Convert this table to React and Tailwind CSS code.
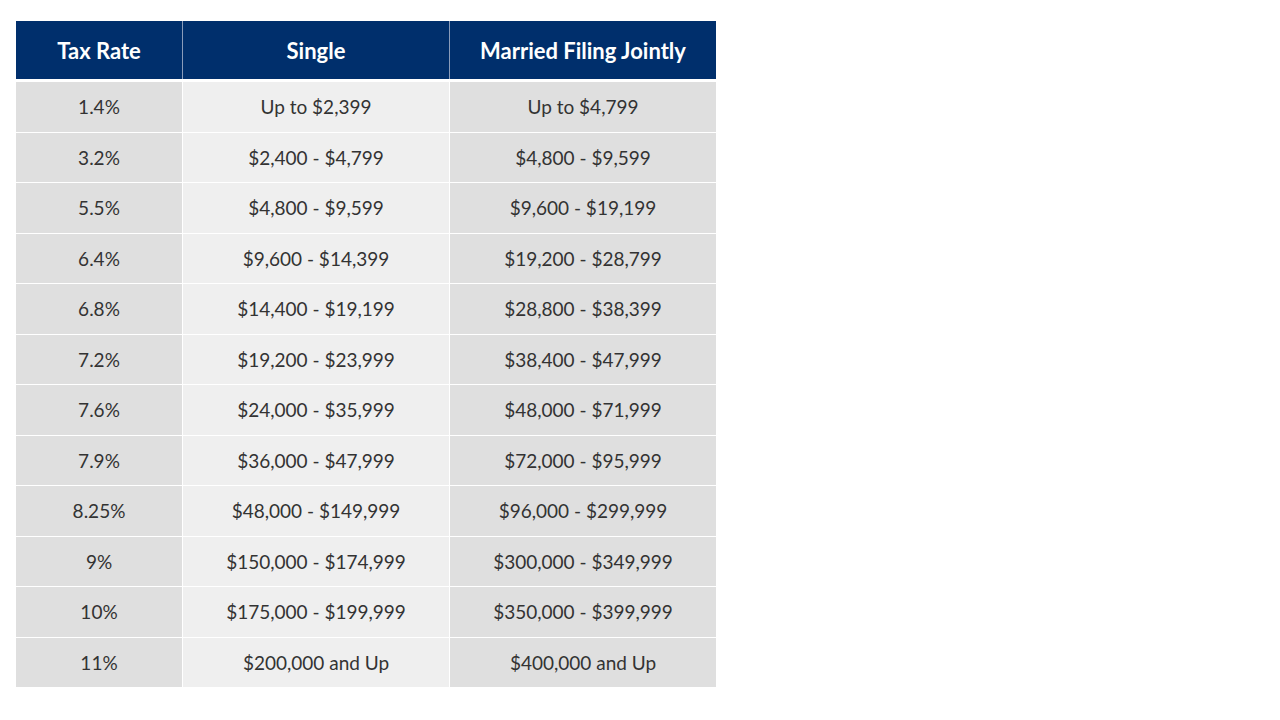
import React from 'react';

const ROWS = [
  ['1.4%', 'Up to $2,399', 'Up to $4,799'],
  ['3.2%', '$2,400 - $4,799', '$4,800 - $9,599'],
  ['5.5%', '$4,800 - $9,599', '$9,600 - $19,199'],
  ['6.4%', '$9,600 - $14,399', '$19,200 - $28,799'],
  ['6.8%', '$14,400 - $19,199', '$28,800 - $38,399'],
  ['7.2%', '$19,200 - $23,999', '$38,400 - $47,999'],
  ['7.6%', '$24,000 - $35,999', '$48,000 - $71,999'],
  ['7.9%', '$36,000 - $47,999', '$72,000 - $95,999'],
  ['8.25%', '$48,000 - $149,999', '$96,000 - $299,999'],
  ['9%', '$150,000 - $174,999', '$300,000 - $349,999'],
  ['10%', '$175,000 - $199,999', '$350,000 - $399,999'],
  ['11%', '$200,000 and Up', '$400,000 and Up'],
];

export default function App() {
  return (
    <div className="w-[1280px] h-[720px] bg-white pl-4 pt-[21px]" style={{ fontFamily: 'Lato, "Liberation Sans", sans-serif' }}>
      <div className="w-[700px] flex flex-col">
        <div className="grid grid-cols-[166px_267px_267px] h-[58px] bg-[#002f6c] text-white font-bold text-[22px]">
          <div className="flex items-center justify-center">Tax Rate</div>
          <div className="flex items-center justify-center border-l border-[#8a9cba]">Single</div>
          <div className="flex items-center justify-center border-l border-[#8a9cba]">Married Filing Jointly</div>
        </div>
        <div className="flex flex-col mt-[3px] gap-px text-[19px] text-[#333333]">
          {ROWS.map((r) => (
            <div key={r[0]} className="grid grid-cols-[166px_267px_267px] h-[49.5px]">
              <div className="flex items-center justify-center bg-[#dfdfdf] pt-px">{r[0]}</div>
              <div className="flex items-center justify-center bg-[#efefef] border-l border-white pt-px">{r[1]}</div>
              <div className="flex items-center justify-center bg-[#dfdfdf] border-l border-white pt-px">{r[2]}</div>
            </div>
          ))}
        </div>
      </div>
    </div>
  );
}
